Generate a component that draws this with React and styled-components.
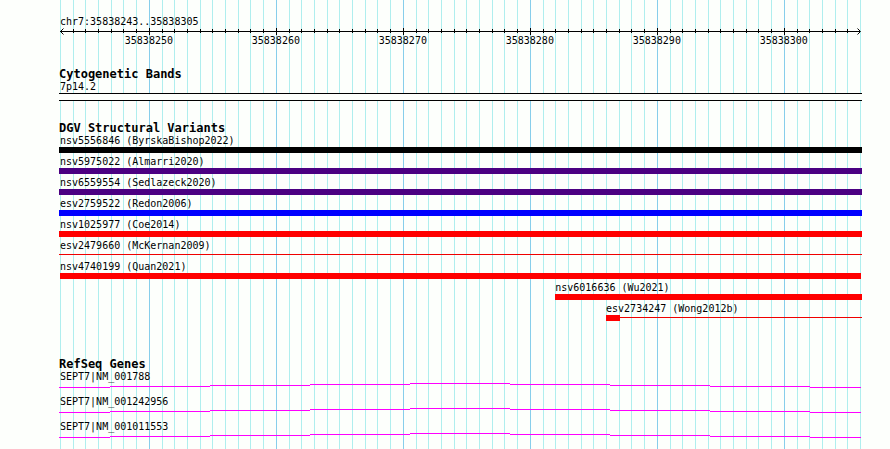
import React from "react";
import styled, { createGlobalStyle } from "styled-components";

const START = 35838243;
const SPAN = 63;
const percent = (position) => `${((position - START) / SPAN) * 100}%`;

const positions = Array.from({ length: SPAN + 1 }, (_, i) => START + i);

const variants = [
  { name: "nsv5556846 (ByrskaBishop2022)", color: "#000000", clipped: true },
  { name: "nsv5975022 (Almarri2020)", color: "#4b0082", clipped: true },
  { name: "nsv6559554 (Sedlazeck2020)", color: "#4b0082", clipped: true },
  { name: "esv2759522 (Redon2006)", color: "#0000ff", clipped: true },
  { name: "nsv1025977 (Coe2014)", color: "#ff0000", clipped: true },
  { name: "esv2479660 (McKernan2009)", color: "#f00000", clipped: true, thin: true },
  { name: "nsv4740199 (Quan2021)", color: "#ff0000" },
  { name: "nsv6016636 (Wu2021)", color: "#ff0000", start: 35838282, clippedEnd: true },
  { name: "esv2734247 (Wong2012b)", color: "#f00000", start: 35838286, clippedEnd: true, thin: true, block: true },
];

const genes = ["SEPT7|NM_001788", "SEPT7|NM_001242956", "SEPT7|NM_001011553"];

/* Where each step of the intron line begins, with its height. */
const intronSteps = [
  [0, 4],
  [51, 3],
  [151, 2],
  [251, 1],
  [351, 0],
  [451, 1],
  [551, 2],
  [651, 3],
  [751, 4],
];
const INTRON_WIDTH = 802;

const GlobalStyle = createGlobalStyle`
  body {
    margin: 0;
    background: #fdfffc;
    color: #000;
    font: 10px/12px "DejaVu Sans Mono", "Liberation Mono", monospace;
  }
`;

const Browser = styled.main`
  display: grid;
  box-sizing: border-box;
  min-height: 100vh;
  padding: 0 30px 0 60px;
`;

const GridLines = styled.svg`
  grid-area: 1 / 1;
  width: 100%;
  height: 100%;
  overflow: visible;
  shape-rendering: crispEdges;
`;

const Tracks = styled.div`
  grid-area: 1 / 1;
  min-width: 0;
  padding: 15px 0 0;
  white-space: nowrap;
`;

const Region = styled.header`
  line-height: 13px;
`;

const Ruler = styled.svg`
  display: block;
  width: 100%;
  height: 20px;
  overflow: visible;

  rect {
    shape-rendering: crispEdges;
  }
`;

const Track = styled.section`
  margin-top: ${(p) => p.$gap}px;
`;

const TrackTitle = styled.h2`
  margin: 0 0 0 -1px;
  font-size: 12px;
  line-height: 14px;
  font-weight: 700;
`;

const Label = styled.div`
  line-height: 12px;
`;

const Band = styled.div`
  height: 6px;
  margin: 0 -2px 0 -1px;
  border: solid #000;
  border-width: 1px 0;
  background: #fdfffc;
`;

const Feature = styled.div`
  margin: 0 0 3px ${(p) => p.$start};
`;

const Glyph = styled.div`
  display: flex;
  height: 6px;
  margin: 0 ${(p) => (p.$overRight ? "-2px" : "-1px")} 0 ${(p) => (p.$overLeft ? "-1px" : "0")};
`;

const Bar = styled.div`
  flex: 1;
  height: ${(p) => (p.$thin ? 1 : 6)}px;
  margin-top: ${(p) => (p.$thin ? 2 : 0)}px;
  background: ${(p) => p.$color};
`;

const Block = styled.div`
  width: 14px;
  height: 6px;
  background: #ff0000;
`;

const Gene = styled.div`
  margin: 0 -1px 8px;
`;

const GeneLabel = styled(Label)`
  padding-left: 1px;
`;

const Intron = styled.svg`
  display: block;
  width: 100%;
  height: 5px;
  shape-rendering: crispEdges;
`;

function RulerScale() {
  return (
    <Ruler role="img" aria-label="Genomic position scale">
      <rect x="0" y="3" width="100%" height="1" />
      {positions.slice(1, -1).map((position) => {
        const major = position % 10 === 0;
        return (
          <rect
            key={position}
            x={percent(position)}
            y={major ? 0 : 1}
            width="1"
            height={major ? 7 : 4}
          />
        );
      })}
      <path d="M3.5 0.5L0.5 3.5L3.5 6.5" fill="none" stroke="#000" />
      <svg x="100%" overflow="visible">
        <path d="M-2.5 0.5L0.5 3.5L-2.5 6.5" fill="none" stroke="#000" />
      </svg>
      {positions
        .filter((position) => position % 10 === 0)
        .map((position) => (
          <text key={position} x={percent(position)} y="16" textAnchor="middle">
            {position}
          </text>
        ))}
    </Ruler>
  );
}

function IntronLine() {
  return (
    <Intron aria-hidden="true">
      {intronSteps.map(([from, y], i) => {
        const to = i + 1 < intronSteps.length ? intronSteps[i + 1][0] : INTRON_WIDTH;
        return (
          <rect
            key={from}
            x={`${(from / INTRON_WIDTH) * 100}%`}
            y={y}
            width={`${((to - from) / INTRON_WIDTH) * 100}%`}
            height="1"
            fill="#ff00ff"
          />
        );
      })}
    </Intron>
  );
}

export default function App() {
  return (
    <>
      <GlobalStyle />
      <Browser>
        <GridLines aria-hidden="true">
          {positions.map((position) => (
            <rect
              key={position}
              x={percent(position)}
              y="0"
              width="1"
              height="100%"
              fill={position % 10 === 0 ? "#87ceeb" : "#afeeee"}
            />
          ))}
        </GridLines>
        <Tracks>
          <Region>chr7:35838243..35838305</Region>
          <RulerScale />
          <Track $gap={19}>
            <TrackTitle>Cytogenetic Bands</TrackTitle>
            <Label>7p14.2</Label>
            <Band />
          </Track>
          <Track $gap={20}>
            <TrackTitle>DGV Structural Variants</TrackTitle>
            {variants.map((v) => (
              <Feature key={v.name} $start={percent(v.start ?? START)}>
                <Label>{v.name}</Label>
                <Glyph $overLeft={v.clipped} $overRight={v.clipped || v.clippedEnd}>
                  {v.block && <Block />}
                  <Bar $color={v.color} $thin={v.thin} />
                </Glyph>
              </Feature>
            ))}
          </Track>
          <Track $gap={36}>
            <TrackTitle>RefSeq Genes</TrackTitle>
            {genes.map((gene) => (
              <Gene key={gene}>
                <GeneLabel>{gene}</GeneLabel>
                <IntronLine />
              </Gene>
            ))}
          </Track>
        </Tracks>
      </Browser>
    </>
  );
}
